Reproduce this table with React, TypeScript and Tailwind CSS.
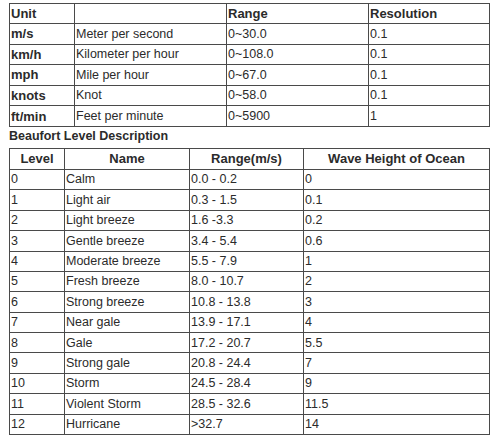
const units = [
  { unit: 'm/s', name: 'Meter per second', range: '0~30.0', res: '0.1' },
  { unit: 'km/h', name: 'Kilometer per hour', range: '0~108.0', res: '0.1' },
  { unit: 'mph', name: 'Mile per hour', range: '0~67.0', res: '0.1' },
  { unit: 'knots', name: 'Knot', range: '0~58.0', res: '0.1' },
  { unit: 'ft/min', name: 'Feet per minute', range: '0~5900', res: '1' },
];

const levels = [
  ['0', 'Calm', '0.0 - 0.2', '0'],
  ['1', 'Light air', '0.3 - 1.5', '0.1'],
  ['2', 'Light breeze', '1.6 -3.3', '0.2'],
  ['3', 'Gentle breeze', '3.4 - 5.4', '0.6'],
  ['4', 'Moderate breeze', '5.5 - 7.9', '1'],
  ['5', 'Fresh breeze', '8.0 - 10.7', '2'],
  ['6', 'Strong breeze', '10.8 - 13.8', '3'],
  ['7', 'Near gale', '13.9 - 17.1', '4'],
  ['8', 'Gale', '17.2 - 20.7', '5.5'],
  ['9', 'Strong gale', '20.8 - 24.4', '7'],
  ['10', 'Storm', '24.5 - 28.4', '9'],
  ['11', 'Violent Storm', '28.5 - 32.6', '11.5'],
  ['12', 'Hurricane', '>32.7', '14'],
];

const cell = 'border border-[#4a4a4a] px-[1px] py-0 align-middle leading-none';

export default function App() {
  return (
    <div className="w-[503px] h-[437px] bg-white overflow-hidden font-['Liberation_Sans',Arial,sans-serif] text-[#2b2b2b]">
      <div className="pl-[9px] pt-[3px]">
        <table className="table-fixed border-collapse w-[480px] text-[12.5px]">
          <colgroup>
            <col className="w-[65px]" />
            <col className="w-[152px]" />
            <col className="w-[142px]" />
            <col className="w-[121px]" />
          </colgroup>
          <thead>
            <tr className="h-[20px] text-[13px] font-bold text-left">
              <th className={cell}>Unit</th>
              <th className={cell}></th>
              <th className={cell}>Range</th>
              <th className={cell}>Resolution</th>
            </tr>
          </thead>
          <tbody>
            {units.map((u) => (
              <tr key={u.unit} className="h-[20.6px]">
                <td className={`${cell} font-bold text-[13px]`}>{u.unit}</td>
                <td className={cell}>{u.name}</td>
                <td className={cell}>{u.range}</td>
                <td className={cell}>{u.res}</td>
              </tr>
            ))}
          </tbody>
        </table>

        <div className="mt-[2px] h-[19px] text-[12.5px] font-bold leading-[15px]">Beaufort Level Description</div>

        <table className="table-fixed border-collapse w-[480px] text-[12.5px]">
          <colgroup>
            <col className="w-[55px]" />
            <col className="w-[125px]" />
            <col className="w-[114px]" />
            <col className="w-[186px]" />
          </colgroup>
          <thead>
            <tr className="h-[21px] font-bold text-[13px] text-center">
              <th className={cell}>Level</th>
              <th className={cell}>Name</th>
              <th className={cell}>Range(m/s)</th>
              <th className={cell}>Wave Height of Ocean</th>
            </tr>
          </thead>
          <tbody>
            {levels.map((r) => (
              <tr key={r[0]} className="h-[20.4px]">
                {r.map((v, i) => (
                  <td key={i} className={cell}>{v}</td>
                ))}
              </tr>
            ))}
          </tbody>
        </table>
      </div>
    </div>
  );
}
